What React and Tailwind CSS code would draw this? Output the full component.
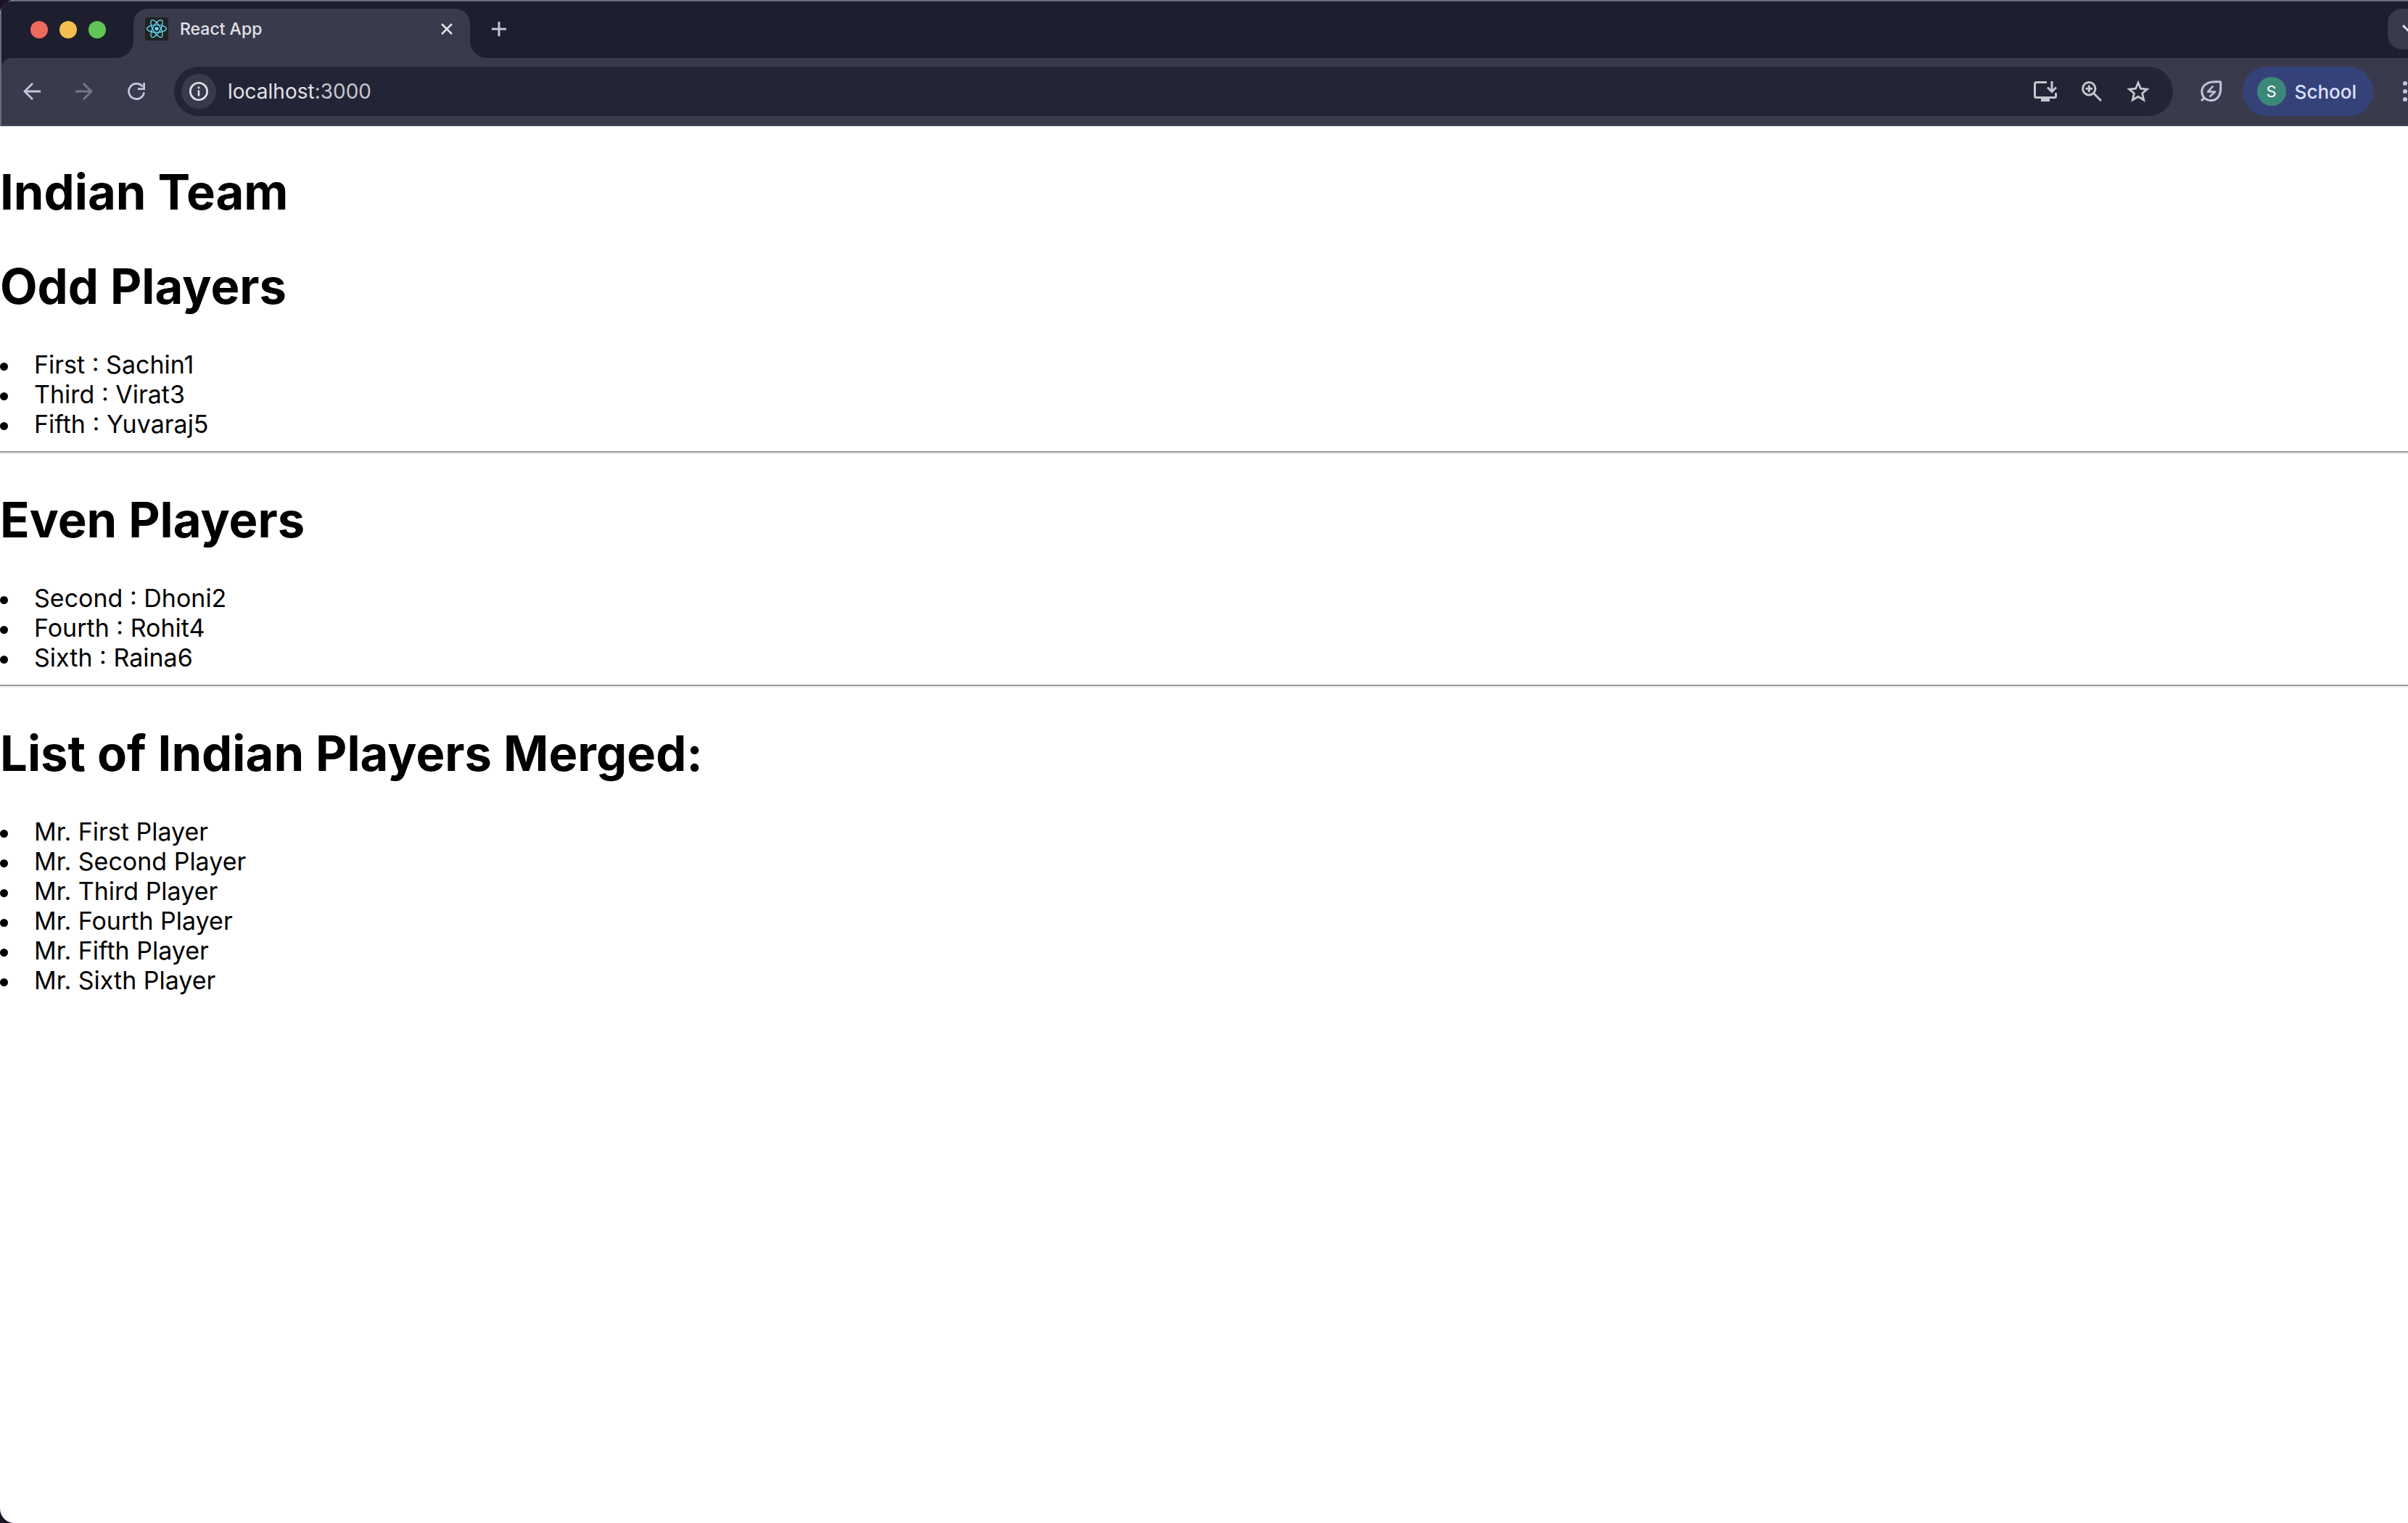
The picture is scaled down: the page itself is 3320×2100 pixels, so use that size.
const sections = [
  { title: "Odd Players", items: ["First : Sachin1", "Third : Virat3", "Fifth : Yuvaraj5"], rule: true },
  { title: "Even Players", items: ["Second : Dhoni2", "Fourth : Rohit4", "Sixth : Raina6"], rule: true },
  {
    title: "List of Indian Players Merged:",
    items: [
      "Mr. First Player",
      "Mr. Second Player",
      "Mr. Third Player",
      "Mr. Fourth Player",
      "Mr. Fifth Player",
      "Mr. Sixth Player",
    ],
    rule: false,
  },
];

function Favicon() {
  return (
    <svg viewBox="0 0 32 32" className="size-8 shrink-0" aria-hidden="true">
      <rect width="32" height="32" rx="3" fill="#222222" />
      <g fill="none" stroke="#61dafb" strokeWidth="1.3">
        <ellipse cx="16" cy="15.5" rx="13.4" ry="5.2" />
        <ellipse cx="16" cy="15.5" rx="13.4" ry="5.2" transform="rotate(60 16 15.5)" />
        <ellipse cx="16" cy="15.5" rx="13.4" ry="5.2" transform="rotate(120 16 15.5)" />
      </g>
      <circle cx="16" cy="15.5" r="2.6" fill="#61dafb" />
    </svg>
  );
}

function TabStrip() {
  return (
    <div className="flex h-[78px] overflow-hidden bg-[#1d1f2f]">
      <div className="w-[182px] shrink-0 bg-[#393b4c]">
        <div className="flex h-full w-full gap-4 rounded-br-[24px] bg-[#1d1f2f] pt-[27px] pl-10">
          <button aria-label="Close window" className="size-6 rounded-full bg-[#ed6a5e]" />
          <button aria-label="Minimize window" className="size-6 rounded-full bg-[#f5bf4f]" />
          <button aria-label="Zoom window" className="size-6 rounded-full bg-[#61c554]" />
        </div>
      </div>
      <div className="w-[464px] shrink-0 pt-2.5">
        <div className="flex h-full items-start rounded-t-[20px] bg-[#393b4c] pt-3 pr-6 pl-4">
          <Favicon />
          <span className="ml-4 text-[23px] leading-8 font-medium text-[#e3e1e9]">React App</span>
          <button aria-label="Close tab" className="mt-2 ml-auto">
            <svg viewBox="0 0 16 16" className="size-4" fill="none" stroke="#e3e1e9" strokeWidth="2.6">
              <path d="M1 1 15 15M15 1 1 15" />
            </svg>
          </button>
        </div>
      </div>
      <div className="flex flex-1 bg-[#393b4c]">
        <div className="flex flex-1 items-start justify-between rounded-bl-[24px] bg-[#1d1f2f]">
          <button aria-label="New tab" className="mt-7 ml-[30px]">
            <svg viewBox="0 0 20 20" className="size-5" fill="none" stroke="#c3c5dd" strokeWidth="3">
              <path d="M10 0V20M0 10H20" />
            </svg>
          </button>
          <button
            aria-label="Search tabs"
            className="mt-2.5 flex h-14 w-7 items-center justify-end rounded-l-[20px] bg-[#393b4c]"
          >
            <svg viewBox="0 0 8 14" className="h-3.5 w-2" fill="none" stroke="#e3e1e9" strokeWidth="3">
              <path d="M1 2 10 11" />
            </svg>
          </button>
        </div>
      </div>
    </div>
  );
}

function Toolbar() {
  return (
    <div className="bg-[#1d1f2f]">
      <div className="flex h-[94px] items-start rounded-tl-[14px] border-b-2 border-[#4a4a52] bg-[#393b4c] pt-3 pl-[30px]">
        <div className="flex h-17 items-center gap-12">
          <button aria-label="Back">
            <svg viewBox="0 0 24 24" className="size-6" fill="none" stroke="#c3c5dd" strokeWidth="2.8">
              <path d="M24 12H2M13 1 2 12 13 23" />
            </svg>
          </button>
          <button aria-label="Forward">
            <svg viewBox="0 0 24 24" className="size-6" fill="none" stroke="#767787" strokeWidth="2.8">
              <path d="M0 12H22M11 1 22 12 11 23" />
            </svg>
          </button>
          <button aria-label="Reload">
            <svg viewBox="0 0 24 24" className="size-6" fill="none" stroke="#c3c5dd" strokeWidth="2.8">
              <path d="M20.6 5.5A10.6 10.6 0 1 0 22.6 13.5M22.6 0V8.6H14" />
            </svg>
          </button>
        </div>
        <div className="ml-10 flex h-17 flex-1 items-center rounded-full bg-[#222535] pr-8 pl-2.5">
          <button
            aria-label="View site information"
            className="flex size-12 items-center justify-center rounded-full bg-[#393b4c]"
          >
            <svg viewBox="0 0 26 26" className="size-[26px]" fill="none" stroke="#e3e1e9" strokeWidth="2.6">
              <circle cx="13" cy="13" r="11.7" />
              <path d="M13 11.5V19.5M13 6.5V9.2" />
            </svg>
          </button>
          <div className="ml-4 flex-1 text-[28px] leading-9 text-[#e3e1e9]">
            localhost<span className="text-[#c7c5cd]">:3000</span>
          </div>
          <div className="flex items-center gap-[34px]">
            <button aria-label="Install app">
              <svg viewBox="0 0 32 28" className="h-7 w-8" fill="none" stroke="#c7c5cd" strokeWidth="3">
                <path d="M18 1.5H3.5a2 2 0 0 0-2 2V20.5a2 2 0 0 0 2 2H28.5a2 2 0 0 0 2-2V16M25 0V14M19 8.5 25 14.5 31 8.5" />
                <path d="M10 26H22" strokeWidth="4" />
              </svg>
            </button>
            <button aria-label="Page zoom">
              <svg viewBox="0 0 28 28" className="size-7" fill="none" stroke="#c7c5cd" strokeWidth="3">
                <circle cx="10.2" cy="10.2" r="8.7" />
                <path d="M16.5 16.5 27 27M10.2 5.5V15M5.5 10.2H15" />
              </svg>
            </button>
            <button aria-label="Bookmark this tab">
              <svg viewBox="0 0 32 30" className="h-[30px] w-8" fill="none" stroke="#c7c5cd" strokeWidth="2.8">
                <path d="M16 3 19.5 11.2 28.3 12 21.6 17.8 23.7 26.8 16 22.2 8.3 26.8 10.4 17.8 3.7 12 12.5 11.2Z" />
              </svg>
            </button>
          </div>
        </div>
        <div className="ml-[38px] flex h-17 items-center">
          <button aria-label="Energy saver">
            <svg
              viewBox="0 0 30 30"
              className="size-[30px]"
              fill="none"
              stroke="#c3c5dd"
              strokeWidth="3"
              strokeLinejoin="round"
            >
              <path d="M26.5 1.8H19C8.5 1.8 1.8 7.5 1.8 15C1.8 22.2 7 27.5 14.5 27.5C22.5 27.5 27.7 21 27.7 11V3A1.2 1.2 0 0 0 26.5 1.8ZM1 28 5.5 23.5" />
              <path d="M17.5 7.5 10 15.5H20L12.5 22.5" strokeWidth="2.5" />
            </svg>
          </button>
        </div>
        <button className="ml-7 flex h-17 items-center rounded-full bg-[#35427a] pr-[23px] pl-5 text-[26px] font-medium text-[#dee0ff]">
          <span className="mr-3 flex size-10 items-center justify-center rounded-full bg-[#3c8879] text-[22px] font-normal text-white">
            S
          </span>
          School
        </button>
        <button
          aria-label="Browser menu"
          className="ml-[41px] flex h-17 w-[7px] flex-col items-start justify-center gap-[5px]"
        >
          <span className="size-1.5 rounded-full bg-[#c3c5dd]" />
          <span className="size-1.5 rounded-full bg-[#c3c5dd]" />
          <span className="size-1.5 rounded-full bg-[#c3c5dd]" />
        </button>
      </div>
    </div>
  );
}

export default function App() {
  return (
    <div className="bg-[#1b1426] font-['Inter',sans-serif]">
      <div className="flex min-h-screen flex-col overflow-hidden rounded-tl-[20px] rounded-bl-[20px] bg-white text-black">
        <header className="rounded-tl-[20px] border-t-2 border-l-2 border-[#6a6c78] bg-[#1d1f2f]">
          <TabStrip />
          <Toolbar />
        </header>
        <main className="flex-1 pt-[47px]">
          <h1 className="mb-[43px] text-[67px] leading-[87px] font-bold">Indian Team</h1>
          {sections.map((section) => (
            <section key={section.title}>
              <h1 className="mb-[43px] text-[67px] leading-[87px] font-bold">{section.title}</h1>
              <ul className="pt-px text-[34px] leading-[41px]">
                {section.items.map((item) => (
                  <li
                    key={item}
                    className="flex items-center gap-9 before:mt-1.5 before:size-[11px] before:rounded-full before:bg-black"
                  >
                    {item}
                  </li>
                ))}
              </ul>
              {section.rule && (
                <hr className="mt-[17px] mb-[47px] h-1 border-t-2 border-b-2 border-t-[#9a9a9a] border-b-[#eeeeee]" />
              )}
            </section>
          ))}
        </main>
      </div>
    </div>
  );
}
